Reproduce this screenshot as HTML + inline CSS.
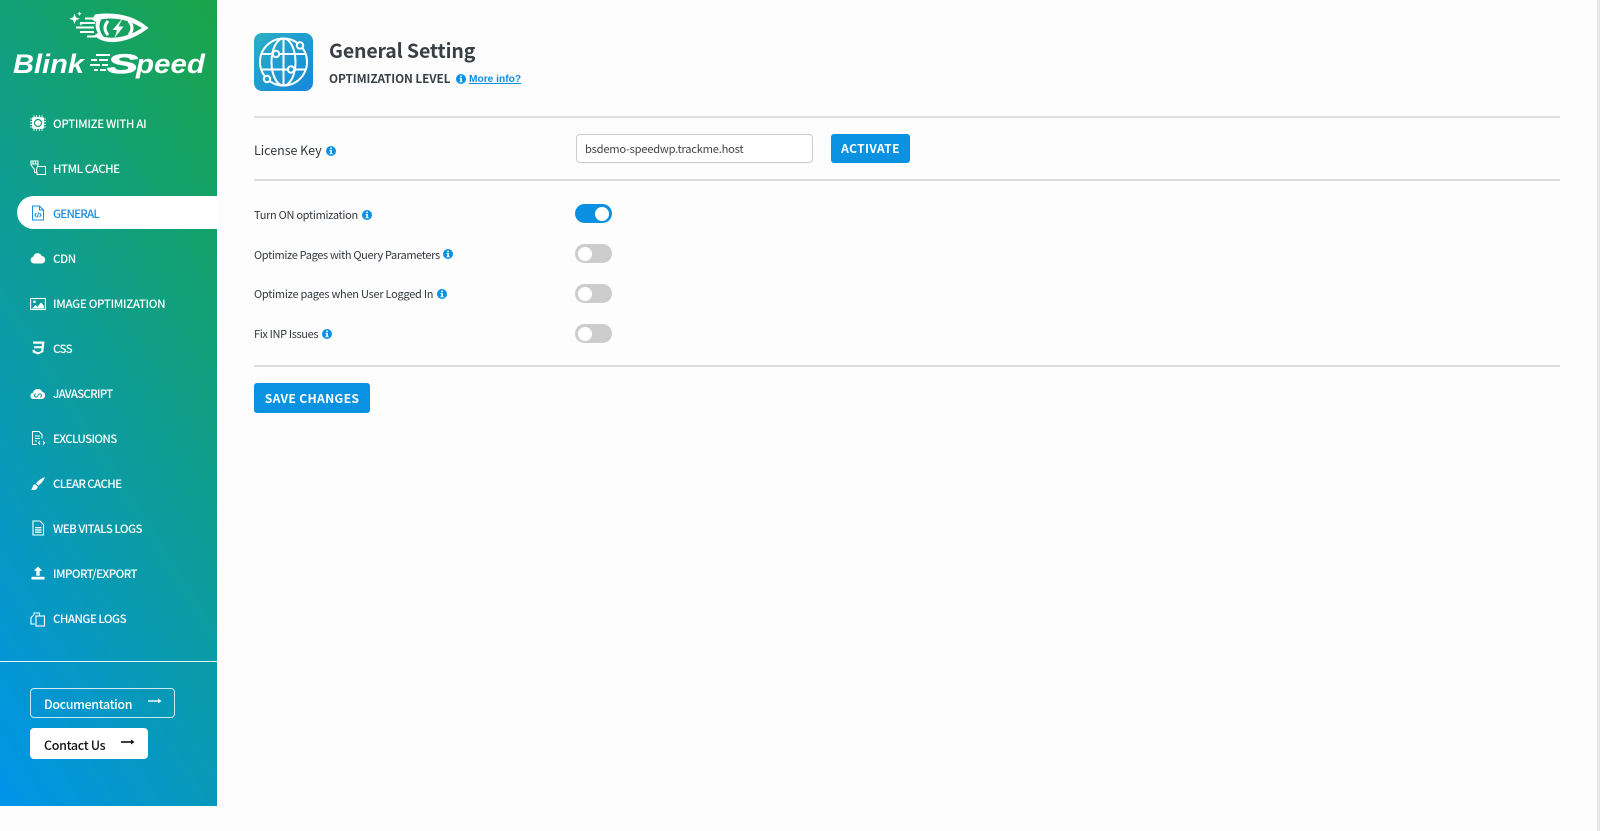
<!DOCTYPE html>
<html lang="en"><head><meta charset="utf-8"><title>General Setting</title>
<style>
*{box-sizing:border-box}
html,body{margin:0;padding:0;width:1600px;height:831px;overflow:hidden;background:#fdfdfd;font-family:"Noto Sans CJK SC","Liberation Sans",sans-serif}
.a{position:absolute}
#side{left:0;top:0;width:217px;height:806px;background:linear-gradient(238deg,#1aa548 0%,#0094ea 100%)}
.m{position:absolute;left:53px;color:#fff;font-size:11.5px;font-weight:500;line-height:16px;white-space:nowrap;letter-spacing:-.33px}
.i{position:absolute;left:30px;width:16px;height:16px}
.hr{position:absolute;left:254px;width:1306px;height:2px;background:#dedede}
.lb{position:absolute;left:254px;font-size:11px;line-height:16px;color:#33383d;white-space:nowrap;letter-spacing:-.35px}
.inf{position:absolute;width:10px;height:10px}
.t{position:absolute;left:575px;width:37px;height:19px;border-radius:10px;background:#ccc}
.t:after{content:"";position:absolute;left:3px;top:2.5px;width:14px;height:14px;border-radius:50%;background:#fff}
.t.on{background:#0a90e2}.t.on:after{left:20px}
.btn{position:absolute;background:#0a92e2;color:#fff;border-radius:3px;font-weight:700;text-align:center;white-space:nowrap}
</style></head><body>
<svg width="0" height="0" style="position:absolute"><defs>
<symbol id="inf" viewBox="0 0 10 10"><circle cx="5" cy="5" r="5" fill="#0a90e2"/><rect x="4.2" y="1.6" width="1.7" height="1.6" fill="#fff"/><path d="M3.5 4.1h2.4v3.2h.8v1H3.5v-1h.8V5.1h-.8z" fill="#fff"/></symbol>
</defs></svg>

<div id="side" class="a"></div>
<svg class="a" style="left:0;top:0" width="217" height="85" viewBox="0 0 217 85">
<g fill="#fff">
<path d="M74.5 13.5l1.4 3.9 3.9 1.4-3.9 1.4-1.4 3.9-1.4-3.9-3.9-1.4 3.9-1.400z"/><path d="M79.5 11.5l.7 1.600 1.600.7-1.600.7-.7 1.600-.7-1.600-1.600-.7 1.600-.7z"/><path d="M81 22l.6 1.300 1.300.6-1.300.6-.6 1.300-.6-1.300-1.300-.6 1.300-.6z"/>
<path fill-rule="evenodd" d="M95 14.500C118 11 136 17 148.500 28 136 38 120 44 106 41.500 101 40.500 97 38 94 35.500L98 33C96 30 95 26 96 22L92 19.500 95 14.500zM101 19.500C98.500 25 99 32 104 37 118 39.500 131 35 142 28 131 21 116 16.500 101 19.500z"/>
<rect x="85" y="17.500" width="11" height="2"/><rect x="80" y="22" width="15" height="2"/><rect x="76" y="26.500" width="18" height="2"/><rect x="80" y="31" width="14" height="2"/><rect x="87" y="35.500" width="9" height="2"/>
<path d="M121.500 19.500L112.500 30H117L114.500 38 123.500 26.500H118.500L122 19.500z"/>
</g>
<g fill="none" stroke="#fff" stroke-width="3"><path d="M108 21Q102 28 108 35M129 21Q135 28 129 35"/></g>
<g fill="#fff" font-family="'Liberation Sans',sans-serif" font-weight="700" font-style="italic">
<text x="13" y="73" font-size="27" textLength="71" lengthAdjust="spacingAndGlyphs">Blink</text>
<text x="107" y="73" font-size="27" stroke="#fff" stroke-width=".8" textLength="31" lengthAdjust="spacingAndGlyphs">S</text>
<text x="136" y="73" font-size="27" textLength="69" lengthAdjust="spacingAndGlyphs">peed</text>
<rect x="96" y="54" width="14" height="2"/><rect x="91" y="59" width="6" height="2"/><rect x="99" y="59" width="9" height="2"/><rect x="90" y="64" width="10" height="2"/><rect x="102" y="64" width="6" height="2"/><rect x="94" y="69" width="4" height="2"/><rect x="100" y="69" width="6" height="2"/>
</g>
</svg>

<div class="a" style="left:17px;top:196px;width:200px;height:33px;background:#fff;border-radius:17px 0 0 17px"></div>

<svg class="i" style="top:115px" viewBox="0 0 16 16"><rect x="2" y="2" width="12" height="12" rx="2" fill="#fff"/><circle cx="8" cy="8" r="3.500" fill="none" stroke="#1a9f78" stroke-width="1.200"/><path d="M4 0v16M6.700 0v16M9.300 0v16M12 0v16M0 4h16M0 6.700h16M0 9.300h16M0 12h16" stroke="#fff" stroke-width=".8" stroke-dasharray="2 12"/></svg>
<div class="m" style="top:115.500px">OPTIMIZE WITH AI</div>
<svg class="i" style="top:160px" viewBox="0 0 16 16" fill="none" stroke="#fff" stroke-width="1"><path d="M1 1h7v4L6.500 9.500v3h-2v-3L1 5z"/><path d="M1 4h7M3 1v3M5.500 1v3"/><path d="M8 6.500h7.500v8h-8.500v-3"/></svg>
<div class="m" style="top:161px;letter-spacing:-.48px">HTML CACHE</div>
<svg class="i" style="top:205px" viewBox="0 0 16 16" fill="none" stroke="#1a8fe0" stroke-width="1"><path d="M2.500 1h7l4 4v10h-11z"/><path d="M9.500 1v4h4"/><path d="M6.500 8L4.800 10l1.700 2M9.500 8l1.700 2-1.700 2M8.600 7.500l-1.200 5"/></svg>
<div class="m" style="top:206px;color:#1a8fe0;letter-spacing:-.76px">GENERAL</div>
<svg class="i" style="top:250px" viewBox="0 0 16 16"><path d="M4 13.500a3.500 3.500 0 0 1-.7-6.900A4.500 4.500 0 0 1 11.800 6a3.800 3.800 0 0 1 .4 7.500z" fill="#fff"/></svg>
<div class="m" style="top:251px">CDN</div>
<svg class="i" style="top:296px" viewBox="0 0 16 16"><rect x=".6" y="2.500" width="14.800" height="11" fill="none" stroke="#fff" stroke-width="1.100"/><circle cx="4.500" cy="5.800" r="1.300" fill="#fff"/><path d="M2 12.500l3.500-3.500 2 1.700L11 6.500l3 3.500v2.500z" fill="#fff"/></svg>
<div class="m" style="top:296px">IMAGE OPTIMIZATION</div>
<svg class="i" style="top:340px" viewBox="0 0 16 16"><path d="M3 1.500h11.500l-1.200 10.500L8 14.500 2.800 12.500 2.500 9.800h2.200l.2 1.200L8 12.200l3.200-1.100.3-2.800H4.300L4 6.200h7.700l.2-2.400H3.300z" fill="#fff"/></svg>
<div class="m" style="top:341px;letter-spacing:-.63px">CSS</div>
<svg class="i" style="top:386px" viewBox="0 0 16 16"><path d="M3.500 13a3.200 3.200 0 0 1-.6-6.300A5 5 0 0 1 12.200 5.800 3.700 3.700 0 0 1 12.300 13z" fill="#fff"/><path d="M6 8a1.500 1.500 0 1 0 0 3h1l2-3h1a1.500 1.500 0 1 1 0 3" fill="none" stroke="#0f9a9c" stroke-width=".9"/></svg>
<div class="m" style="top:386px;letter-spacing:-.73px">JAVASCRIPT</div>
<svg class="i" style="top:430px" viewBox="0 0 16 16" fill="none" stroke="#fff" stroke-width="1.100"><path d="M7 14.500H2.500v-13h6.500l3 3v4"/><path d="M5 6h5M5 8.500h5M5 11h2"/><path d="M10 11l-1.500 1.800 1.500 1.700M13 11l1.500 1.800L13 14.500"/></svg>
<div class="m" style="top:431px;letter-spacing:-.63px">EXCLUSIONS</div>
<svg class="i" style="top:476px" viewBox="0 0 16 16"><path d="M15 1c-3 1-7 3.500-9 6.500l2.300 2C11 8 14 4 15 1z" fill="#fff"/><path d="M5.200 8.300C3.500 8.500 2.800 10 2.500 11.500 2.300 12.500 1.800 13 1 13.300c2.500 1.500 6 1 6.800-2.800z" fill="#fff"/></svg>
<div class="m" style="top:476px;letter-spacing:-.63px">CLEAR CACHE</div>
<svg class="i" style="top:520px" viewBox="0 0 16 16"><path d="M3 1h7l3.500 3.500V15H3z" fill="none" stroke="#fff" stroke-width="1.100"/><rect x="5" y="7" width="6.500" height="1.300" fill="#fff"/><rect x="5" y="9.300" width="6.500" height="1.300" fill="#fff"/><rect x="5" y="11.500" width="6.500" height="1.300" fill="#fff"/></svg>
<div class="m" style="top:521px;letter-spacing:-.53px">WEB VITALS LOGS</div>
<svg class="i" style="top:565px" viewBox="0 0 16 16"><path d="M8 1.500l4.200 4.300H9.700v5H6.300v-5H3.800z" fill="#fff"/><rect x="1.500" y="11.800" width="13" height="2.700" fill="#fff"/></svg>
<div class="m" style="top:566px;letter-spacing:-.56px">IMPORT/EXPORT</div>
<svg class="i" style="top:611px" viewBox="0 0 16 16" fill="none" stroke="#fff" stroke-width="1.100"><path d="M4 4V2h5.500v3"/><path d="M4 4L1 6.500v6.500h4"/><rect x="6" y="5" width="8.500" height="10"/></svg>
<div class="m" style="top:611px;letter-spacing:-.53px">CHANGE LOGS</div>

<div class="a" style="left:0;top:660.500px;width:217px;height:1.500px;background:#e8f6fb"></div>
<div class="a" style="left:30px;top:688px;width:145px;height:30px;border:1px solid #cfe9f4;border-radius:4px"></div>
<div class="a" style="left:44px;top:695px;color:#fff;font-size:12.500px;font-weight:500;line-height:18px;letter-spacing:-.37px">Documentation</div>
<svg class="a" style="left:148px;top:696px" width="14" height="10" viewBox="0 0 14 10"><path d="M0 5h12" stroke="#fff" stroke-width="1.400"/><path d="M10 2.500L13.500 5 10 7.500z" fill="#fff"/></svg>
<div class="a" style="left:30px;top:728px;width:118px;height:31px;background:#fff;border-radius:4px"></div>
<div class="a" style="left:44px;top:736px;color:#111;font-size:12.500px;font-weight:500;line-height:18px;letter-spacing:-.33px">Contact Us</div>
<svg class="a" style="left:121px;top:738px" width="14" height="10" viewBox="0 0 14 10"><path d="M0 4h12" stroke="#111" stroke-width="1.600"/><path d="M10 1.500L13.500 4 10 6.500z" fill="#111"/></svg>

<svg class="a" style="left:254px;top:33px" width="60" height="59" viewBox="0 0 60 59">
<defs><linearGradient id="g" x1="0" y1="0" x2="1" y2="1"><stop offset="0" stop-color="#2ab0c4"/><stop offset="1" stop-color="#1488dc"/></linearGradient></defs>
<rect width="59" height="58" rx="8" fill="url(#g)"/>
<g fill="none" stroke="#fff" stroke-width="2"><circle cx="29.500" cy="29" r="23.500"/><ellipse cx="29.500" cy="29" rx="12" ry="23.500"/><path d="M29.500 5.500v47M7 21h45M7 36.500h45"/></g>
<g fill="#1f9ed2" stroke="#fff" stroke-width="2"><circle cx="22" cy="21" r="3.200"/><circle cx="37" cy="36.500" r="3.200"/><circle cx="46" cy="12.500" r="3.200"/><circle cx="13" cy="46" r="3.200"/></g>
</svg>
<div class="a" style="left:329px;top:35px;font-size:19.500px;font-weight:700;color:#3a3f46;line-height:30px;white-space:nowrap;letter-spacing:-.15px">General Setting</div>
<div class="a" style="left:329px;top:70px;font-size:11.800px;font-weight:700;color:#3a3f46;line-height:18px;white-space:nowrap;letter-spacing:-.1px">OPTIMIZATION LEVEL</div>
<svg class="inf" style="left:456px;top:74px"><use href="#inf"/></svg>
<div class="a" style="left:469px;top:72.500px;font-family:'Liberation Sans',sans-serif;font-size:10.200px;font-weight:700;color:#0a90e2;text-decoration:underline;line-height:14px;white-space:nowrap">More info?</div>
<div class="hr" style="top:116px"></div>

<div class="a" style="left:254px;top:139.500px;font-size:12.500px;color:#33383d;line-height:20px;white-space:nowrap;letter-spacing:-.03px">License Key</div>
<svg class="inf" style="left:326px;top:146px"><use href="#inf"/></svg>
<div class="a" style="left:576px;top:134px;width:237px;height:29px;border:1px solid #ccc;border-radius:4px;background:#fff;font-size:11.200px;color:#444;line-height:29px;padding-left:8px;white-space:nowrap;letter-spacing:-.25px">bsdemo-speedwp.trackme.host</div>
<div class="btn" style="left:831px;top:134px;width:79px;height:29px;font-size:12px;line-height:30px;letter-spacing:.4px">ACTIVATE</div>
<div class="hr" style="top:179px"></div>

<div class="lb" style="top:206.500px;letter-spacing:-.3px">Turn ON optimization</div>
<svg class="inf" style="left:362px;top:210px"><use href="#inf"/></svg>
<div class="t on" style="top:204px"></div>
<div class="lb" style="top:246.500px">Optimize Pages with Query Parameters</div>
<svg class="inf" style="left:443px;top:249px"><use href="#inf"/></svg>
<div class="t" style="top:244px"></div>
<div class="lb" style="top:286px;letter-spacing:-.26px">Optimize pages when User Logged In</div>
<svg class="inf" style="left:437px;top:289px"><use href="#inf"/></svg>
<div class="t" style="top:284px"></div>
<div class="lb" style="top:326px">Fix INP Issues</div>
<svg class="inf" style="left:322px;top:329px"><use href="#inf"/></svg>
<div class="t" style="top:324px"></div>
<div class="hr" style="top:365px"></div>
<div class="btn" style="left:254px;top:383px;width:116px;height:30px;font-size:12.200px;line-height:31px;letter-spacing:.3px">SAVE CHANGES</div>

<div class="a" style="left:1597px;top:0;width:3px;height:831px;background:#e6e6e6"></div>
</body></html>
